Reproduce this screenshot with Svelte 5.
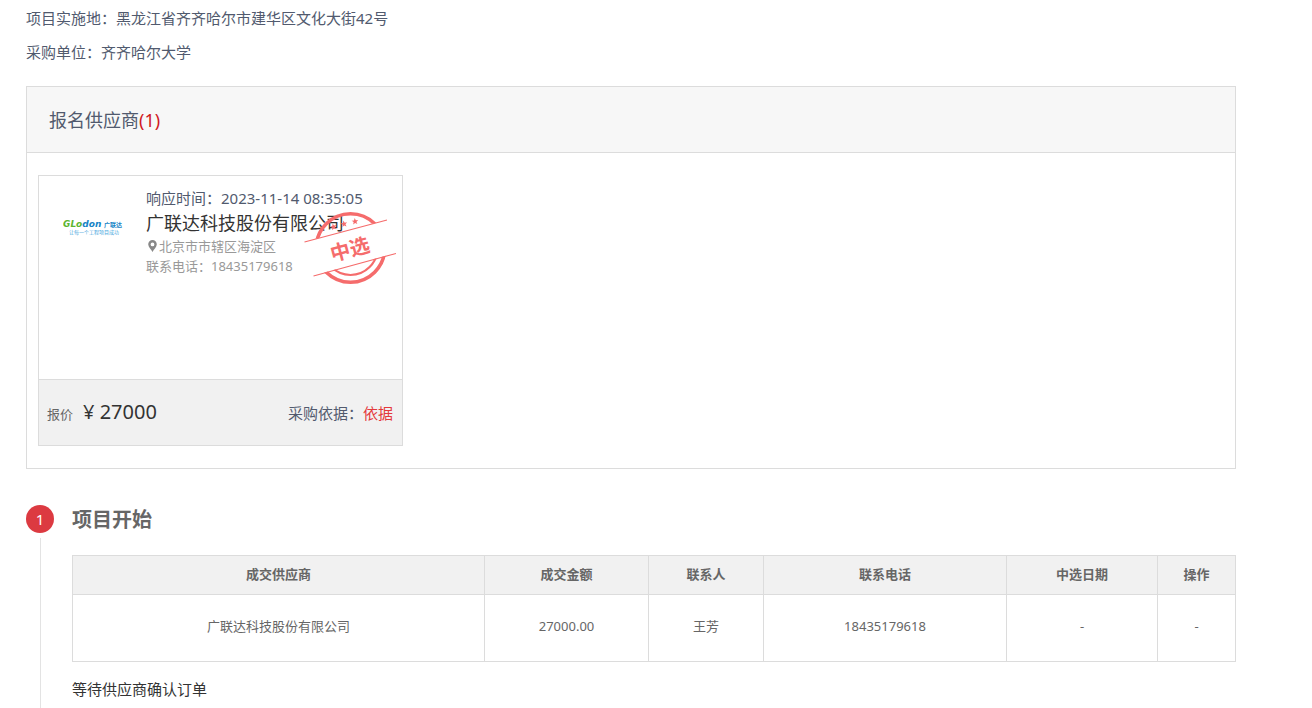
<script>
  const details = [
    { label: '项目实施地', value: '黑龙江省齐齐哈尔市建华区文化大街42号' },
    { label: '采购单位', value: '齐齐哈尔大学' }
  ];

  const suppliers = [
    {
      time: '2023-11-14 08:35:05',
      name: '广联达科技股份有限公司',
      area: '北京市市辖区海淀区',
      phone: '18435179618',
      price: '27000'
    }
  ];

  const columns = [
    { title: '成交供应商', width: 412 },
    { title: '成交金额', width: 164 },
    { title: '联系人', width: 115 },
    { title: '联系电话', width: 243 },
    { title: '中选日期', width: 151 },
    { title: '操作', width: 78 }
  ];

  const rows = [['广联达科技股份有限公司', '27000.00', '王芳', '18435179618', '-', '-']];
</script>

<main class="page">
  <section class="details">
    {#each details as item}
      <p>{item.label}：{item.value}</p>
    {/each}
  </section>

  <section class="panel">
    <h2 class="panel-title">报名供应商<span class="count">({suppliers.length})</span></h2>
    <div class="cards">
      {#each suppliers as s}
        <article class="card">
          <div class="card-body">
            <svg class="logo" viewBox="0 0 60 18" role="img" aria-label="Glodon 广联达">
              <text class="brand" x="0" y="8"><tspan fill="#5cb531">GLo</tspan><tspan fill="#1583c6">don</tspan></text>
              <text class="brand-cn" x="41" y="8">广联达</text>
              <text class="slogan" x="6" y="15">让每一个工程项目成功</text>
            </svg>
            <div class="info">
              <p class="time">响应时间：{s.time}</p>
              <h3 class="name">{s.name}</h3>
              <p class="meta">
                <svg class="pin" viewBox="0 0 13 14" aria-hidden="true">
                  <path fill="#888" fill-rule="evenodd" d="M6.5 1a4.3 4.3 0 0 0-4.3 4.3C2.200 8.200 5.200 10.500 6.500 13c1.300-2.500 4.300-4.800 4.300-7.700A4.300 4.300 0 0 0 6.500 1zm0 2.500a1.900 1.900 0 1 1 0 3.800 1.900 1.900 0 0 1 0-3.800z" />
                </svg>{s.area}
              </p>
              <p class="meta">联系电话：{s.phone}</p>
            </div>
            <svg class="stamp" viewBox="0 0 92 74" role="img" aria-label="中选">
              <defs>
                <clipPath id="stamp-top"><path d="M0 0H92V6.600L0 31z" /></clipPath>
                <clipPath id="stamp-bottom"><path d="M0 67L92 42V74H0z" /></clipPath>
                <path id="star" d="M0-3.500L.9-1.200 3.300-1.100 1.400.5 2.100 2.800 0 1.500-2.100 2.800-1.400.5-3.300-1.100-.9-1.200z" />
              </defs>
              <g fill="none" stroke="#f56c6c">
                <circle cx="46.500" cy="37" r="34.200" stroke-width="3.600" clip-path="url(#stamp-top)" />
                <circle cx="46.500" cy="37" r="34.200" stroke-width="3.600" clip-path="url(#stamp-bottom)" />
                <circle cx="46.500" cy="37" r="27" stroke-width="2.200" clip-path="url(#stamp-bottom)" />
                <path d="M.5 31L83 9M9.500 65L92 42.500" stroke-width="1.200" />
              </g>
              <g fill="#f56c6c">
                <use href="#star" transform="translate(29.500 16) rotate(-15)" />
                <use href="#star" transform="translate(40 13) rotate(-10)" />
                <use href="#star" transform="translate(51 10.500) rotate(-5)" />
                <text class="stamp-text" transform="translate(46 38.500) rotate(-15)" text-anchor="middle" y="7">中选</text>
              </g>
            </svg>
          </div>
          <footer class="card-foot">
            <p class="quote"><span class="quote-label">报价</span><span class="price">¥ {s.price}</span></p>
            <p class="basis">采购依据：<a href="#basis">依据</a></p>
          </footer>
        </article>
      {/each}
    </div>
  </section>

  <section class="step">
    <div class="rail"><span class="dot">1</span></div>
    <div class="step-body">
      <h2 class="step-title">项目开始</h2>
      <table>
        <colgroup>
          {#each columns as c}<col style="width: {c.width}px" />{/each}
        </colgroup>
        <thead>
          <tr>{#each columns as c}<th scope="col">{c.title}</th>{/each}</tr>
        </thead>
        <tbody>
          {#each rows as row}
            <tr>{#each row as cell}<td>{cell}</td>{/each}</tr>
          {/each}
        </tbody>
      </table>
      <p class="status">等待供应商确认订单</p>
    </div>
  </section>
</main>

<style>
  :global(body) {
    margin: 0;
    background: #fff;
  }

  .page {
    box-sizing: border-box;
    padding: 1px 76px 0 26px;
    font-family: 'Noto Sans', 'Noto Sans CJK SC', sans-serif;
    font-size: 15px;
    color: #515a6e;
  }

  p,
  h2,
  h3 {
    margin: 0;
    font-weight: 400;
  }

  .details p {
    line-height: 34px;
  }

  .panel {
    margin-top: 17px;
    border: 1px solid #dcdcdc;
  }

  .panel-title {
    padding: 2px 22px 0;
    border-bottom: 1px solid #dcdcdc;
    background: #f7f7f7;
    font-size: 18px;
    line-height: 63px;
  }

  .count {
    color: #d0191f;
  }

  .cards {
    display: flex;
    flex-wrap: wrap;
    gap: 22px;
    padding: 22px 11px;
  }

  .card {
    box-sizing: border-box;
    width: 365px;
    max-width: 100%;
    border: 1px solid #dcdcdc;
  }

  .card-body {
    position: relative;
    display: flex;
    gap: 23px;
    min-height: 193px;
    padding: 10px 6px 0 24px;
  }

  .logo {
    flex: none;
    width: 60px;
    height: 18px;
    margin-top: 33px;
  }

  .brand {
    font: italic bold 9px 'DejaVu Sans', sans-serif;
  }

  .brand-cn {
    font: bold 6px 'Noto Sans CJK SC', sans-serif;
    fill: #1583c6;
  }

  .slogan {
    font: 5px 'Noto Sans CJK SC', sans-serif;
    fill: #45a5dc;
  }

  .time {
    line-height: 24px;
  }

  .name {
    font-size: 18px;
    line-height: 26px;
    color: #333;
  }

  .meta {
    display: flex;
    align-items: center;
    font-size: 13px;
    line-height: 20px;
    color: #999;
  }

  .pin {
    width: 13px;
    height: 14px;
  }

  .stamp {
    position: absolute;
    top: 35px;
    right: 6px;
    width: 92px;
    height: 74px;
  }

  .stamp-text {
    font: bold 20px 'Noto Sans CJK SC', sans-serif;
  }

  .card-foot {
    display: flex;
    align-items: center;
    justify-content: space-between;
    height: 65px;
    padding: 0 9px 0 8px;
    border-top: 1px solid #dcdcdc;
    background: #f1f1f1;
    line-height: 24px;
  }

  .quote {
    display: flex;
    align-items: baseline;
    gap: 10px;
  }

  .quote-label {
    font-size: 13px;
    color: #666;
  }

  .price {
    font-size: 20px;
    color: #333;
  }

  .basis a {
    color: #e4393c;
    text-decoration: none;
  }

  .step {
    display: flex;
    gap: 18px;
    margin-top: 36px;
  }

  .rail {
    display: flex;
    flex: none;
    flex-direction: column;
    align-items: center;
    gap: 5px;
    width: 28px;
  }

  .rail::after {
    content: '';
    flex: 1;
    width: 1px;
    margin-left: 1px;
    background: #e3e3e3;
  }

  .dot {
    width: 28px;
    border-radius: 50%;
    background: #dc3a41;
    color: #fff;
    line-height: 28px;
    text-align: center;
  }

  .step-body {
    flex: 1;
    min-width: 0;
  }

  .step-title {
    margin-bottom: 20px;
    font-size: 20px;
    font-weight: 700;
    line-height: 30px;
    color: #666;
  }

  table {
    width: 100%;
    border-collapse: collapse;
    table-layout: fixed;
    font-size: 13px;
    line-height: 20px;
    color: #666;
  }

  th,
  td {
    border: 1px solid #dcdcdc;
    text-align: center;
  }

  th {
    padding: 8px 0 10px;
    background: #f1f1f1;
  }

  td {
    padding: 21px 0 25px;
  }

  .status {
    padding: 11px 0 3px;
    line-height: 32px;
    color: #333;
  }
</style>
